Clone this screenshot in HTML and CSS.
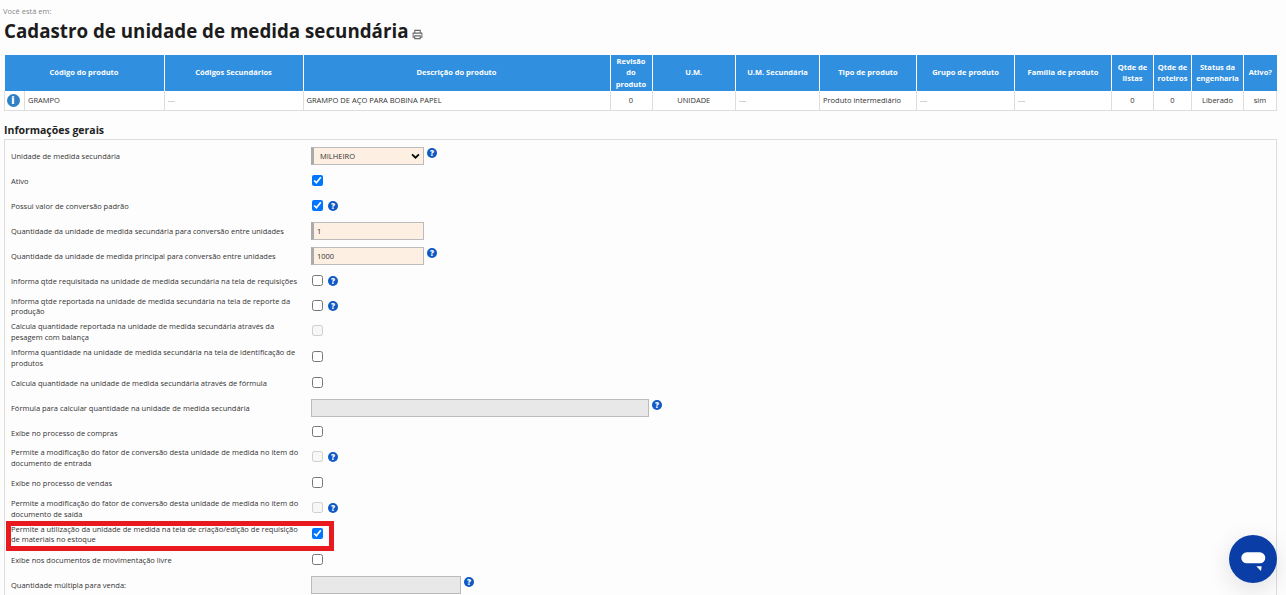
FILE: index.html
```html
<!DOCTYPE html>
<html lang="pt-BR">
<head>
<meta charset="utf-8">
<title>Cadastro de unidade de medida secundária</title>
<link rel="stylesheet" href="styles.css">
</head>
<body>
<main class="page">
  <p class="crumb">Você está em:</p>
  <h1 class="title">Cadastro de unidade de medida secundária
    <svg class="printer" viewBox="0 0 12 12" width="11" height="11" aria-hidden="true"><path d="M3 4V1.5h6V4M3 9H1.2V4.5h9.6V9H9M3 7.5h6v3H3z" fill="none" stroke="#666" stroke-width="1.1"/></svg>
  </h1>
  <table class="product">
    <colgroup>
      <col class="c-info"><col class="c-code"><col class="c-sec"><col class="c-desc"><col class="c-rev"><col class="c-um"><col class="c-ums"><col class="c-tipo"><col class="c-grupo"><col class="c-fam"><col class="c-list"><col class="c-rot"><col class="c-status"><col class="c-ativo">
    </colgroup>
    <thead>
      <tr>
        <th colspan="2">Código do produto</th>
        <th>Códigos Secundários</th>
        <th>Descrição do produto</th>
        <th>Revisão do produto</th>
        <th>U.M.</th>
        <th>U.M. Secundária</th>
        <th>Tipo de produto</th>
        <th>Grupo de produto</th>
        <th>Família de produto</th>
        <th>Qtde de listas</th>
        <th>Qtde de roteiros</th>
        <th>Status da engenharia</th>
        <th>Ativo?</th>
      </tr>
    </thead>
    <tbody>
      <tr>
        <td class="info-cell"><span class="info">i</span></td>
        <td>GRAMPO</td>
        <td class="muted">---</td>
        <td>GRAMPO DE AÇO PARA BOBINA PAPEL</td>
        <td class="center">0</td>
        <td class="center">UNIDADE</td>
        <td class="muted">---</td>
        <td>Produto intermediário</td>
        <td class="muted">---</td>
        <td class="muted">---</td>
        <td class="center">0</td>
        <td class="center">0</td>
        <td class="center">Liberado</td>
        <td class="center">sim</td>
      </tr>
    </tbody>
  </table>

  <h2 class="section">Informações gerais</h2>
  <form class="panel">
    <div class="row">
      <label class="label">Unidade de medida secundária</label>
      <div class="control">
        <select class="field select"><option>MILHEIRO</option></select>
        <span class="help up">?</span>
      </div>
    </div>
    <div class="row">
      <label class="label">Ativo</label>
      <div class="control"><input type="checkbox" class="check" checked></div>
    </div>
    <div class="row">
      <label class="label">Possui valor de conversão padrão</label>
      <div class="control"><input type="checkbox" class="check" checked><span class="help">?</span></div>
    </div>
    <div class="row tight">
      <label class="label">Quantidade da unidade de medida secundária para conversão entre unidades</label>
      <div class="control"><input type="text" class="field text" value="1"></div>
    </div>
    <div class="row">
      <label class="label">Quantidade da unidade de medida principal para conversão entre unidades</label>
      <div class="control"><input type="text" class="field text" value="1000"><span class="help up">?</span></div>
    </div>
    <div class="row">
      <label class="label">Informa qtde requisitada na unidade de medida secundária na tela de requisições</label>
      <div class="control"><input type="checkbox" class="check"><span class="help">?</span></div>
    </div>
    <div class="row">
      <label class="label">Informa qtde reportada na unidade de medida secundária na tela de reporte da produção</label>
      <div class="control"><input type="checkbox" class="check"><span class="help">?</span></div>
    </div>
    <div class="row wide">
      <label class="label">Calcula quantidade reportada na unidade de medida secundária através da pesagem com balança</label>
      <div class="control"><input type="checkbox" class="check" disabled></div>
    </div>
    <div class="row wide">
      <label class="label">Informa quantidade na unidade de medida secundária na tela de identificação de produtos</label>
      <div class="control"><input type="checkbox" class="check"></div>
    </div>
    <div class="row">
      <label class="label">Calcula quantidade na unidade de medida secundária através de fórmula</label>
      <div class="control"><input type="checkbox" class="check"></div>
    </div>
    <div class="row">
      <label class="label">Fórmula para calcular quantidade na unidade de medida secundária</label>
      <div class="control"><input type="text" class="field off formula" disabled><span class="help up">?</span></div>
    </div>
    <div class="row tight">
      <label class="label">Exibe no processo de compras</label>
      <div class="control"><input type="checkbox" class="check"></div>
    </div>
    <div class="row">
      <label class="label">Permite a modificação do fator de conversão desta unidade de medida no item do documento de entrada</label>
      <div class="control"><input type="checkbox" class="check" disabled><span class="help">?</span></div>
    </div>
    <div class="row wide">
      <label class="label">Exibe no processo de vendas</label>
      <div class="control"><input type="checkbox" class="check"></div>
    </div>
    <div class="row">
      <label class="label">Permite a modificação do fator de conversão desta unidade de medida no item do documento de saída</label>
      <div class="control"><input type="checkbox" class="check" disabled><span class="help">?</span></div>
    </div>
    <div class="row wide marked">
      <label class="label">Permite a utilização da unidade de medida na tela de criação/edição de requisição de materiais no estoque</label>
      <div class="control"><input type="checkbox" class="check" checked></div>
    </div>
    <div class="row wide">
      <label class="label">Exibe nos documentos de movimentação livre</label>
      <div class="control"><input type="checkbox" class="check"></div>
    </div>
    <div class="row">
      <label class="label">Quantidade múltipla para venda:</label>
      <div class="control"><input type="text" class="field off multiple" disabled><span class="help up">?</span></div>
    </div>
  </form>
</main>
<button class="chat" type="button" aria-label="Chat">
  <svg viewBox="0 0 48 48" width="48" height="48" aria-hidden="true"><circle cx="24" cy="24" r="24" fill="#0a3ea6"/><rect x="12.3" y="17.3" width="24" height="11" rx="5.5" fill="#fff"/><path d="M27.3 31.3h5.3l-.6 4.7z" fill="#fff"/></svg>
</button>
</body>
</html>
```
FILE: styles.css
```css
*, *::after { box-sizing: border-box; }
html, body { margin: 0; height: 100%; overflow: hidden; }
body {
  background: #fdfdfd;
  color: #333;
  font-family: "Open Sans", "Liberation Sans", sans-serif;
  font-size: 7.5px;
}
.page { padding: 6px 9px 0 3px; }
.crumb { margin: 0; font-size: 7.5px; line-height: 11px; color: #888; }
.title {
  margin: 0 0 0 1px;
  font-size: 18.75px;
  line-height: 27px;
  font-weight: 700;
  color: #1c1c1c;
  white-space: nowrap;
}
.printer { vertical-align: -2px; margin-left: -1px; }

.product {
  width: 1272px;
  margin: 11px 0 0 1px;
  table-layout: fixed;
  border-collapse: collapse;
}
.c-info { width: 20px; }
.c-code { width: 139.5px; }
.c-sec { width: 139px; }
.c-desc { width: 307px; }
.c-rev { width: 42px; }
.c-um { width: 83.5px; }
.c-ums { width: 84px; }
.c-tipo { width: 97px; }
.c-grupo { width: 98px; }
.c-fam { width: 97px; }
.c-list { width: 42px; }
.c-rot { width: 38px; }
.c-status { width: 52px; }
.c-ativo { width: 33px; }
.product th {
  height: 36px;
  padding: 0 2px;
  background: #318fdf;
  color: #fff;
  font-size: 7.5px;
  font-weight: 700;
  line-height: 11.5px;
  text-align: center;
  border-right: 1px solid #fff;
}
.product th:last-child { border-right: 0; }
.product td {
  height: 19px;
  padding: 0 3px;
  background: #fff;
  font-size: 7.5px;
  border: 1px solid #ddd;
  border-top: 0;
  white-space: nowrap;
  overflow: hidden;
}
.product .center { text-align: center; }
.product .muted { color: #999; }
.product .info-cell { padding: 0 0 0 1.5px; text-align: left; }
.info {
  display: inline-flex;
  align-items: center;
  justify-content: center;
  width: 13px;
  height: 13px;
  border-radius: 50%;
  background: #2f80c6;
  color: #fff;
  font-weight: 800;
  font-size: 10px;
  line-height: 1;
  vertical-align: middle;
}

.section {
  margin: 12px 0 0 1px;
  font-size: 10.5px;
  line-height: 15px;
  font-weight: 700;
  color: #222;
}
.panel {
  margin: 1px 0 0 1px;
  width: 1273px;
  min-height: 600px;
  padding: 4px 0 0 6px;
  border: 1px solid #ddd;
  border-bottom: 0;
}
.row {
  position: relative;
  display: flex;
  align-items: center;
  height: 25px;
}
.row.tight { height: 24.5px; }
.row.wide { height: 26px; }
.label {
  width: 300px;
  padding: 1px 9px 0 0;
  line-height: 10.5px;
  color: #333;
}
.control {
  display: flex;
  align-items: center;
  gap: 5px;
}
.check {
  width: 11px;
  height: 11px;
  margin: -1px 0 0 1px;
}
.field {
  height: 18px;
  padding: 0 0 0 3px;
  font: inherit;
  color: #333;
  background: #fdf0e3;
  border: 1px solid #bbb;
  border-left: 3px solid #aaa;
  border-radius: 0;
  outline: 0;
}
.text { width: 113px; }
.select {
  width: 113px;
  padding-left: 6px;
  appearance: none;
  background-image: url("data:image/svg+xml,%3Csvg xmlns='http://www.w3.org/2000/svg' viewBox='0 0 10 7'%3E%3Cpath d='M1 1.5l4 4 4-4' fill='none' stroke='%23000' stroke-width='2'/%3E%3C/svg%3E");
  background-repeat: no-repeat;
  background-position: right 3px center;
  background-size: 9px 6px;
}
.off { background: #e8e8e8; border: 1px solid #bbb; }
.formula { width: 338px; }
.multiple { width: 150px; }
.help {
  display: inline-flex;
  align-items: center;
  justify-content: center;
  width: 10px;
  height: 10px;
  border-radius: 50%;
  background: #0f59c4;
  color: #fff;
  font-size: 8px;
  font-weight: 800;
  line-height: 1;
}
.help.up { align-self: flex-start; margin-left: -2px; margin-top: 1px; }
.marked::after {
  content: "";
  position: absolute;
  left: -5px;
  top: 0;
  width: 328px;
  height: 30px;
  border: 5px solid #e8191f;
  pointer-events: none;
}
.chat {
  position: fixed;
  right: 9px;
  bottom: 12px;
  width: 48px;
  height: 48px;
  padding: 0;
  border: 0;
  border-radius: 50%;
  background: transparent;
  box-shadow: 0 6px 24px rgba(0, 0, 0, .12);
}
.chat svg { display: block; }
```
